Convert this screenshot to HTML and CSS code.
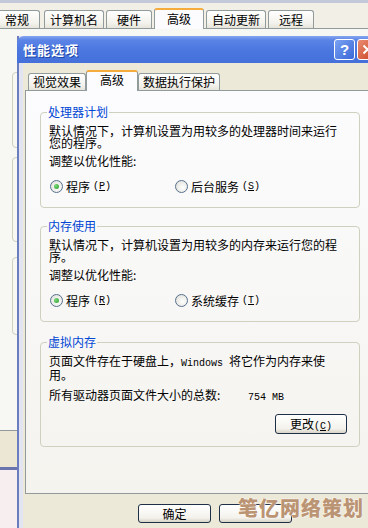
FILE: index.html
```html
<!DOCTYPE html>
<html lang="zh-CN">
  <head>
    <meta charset="UTF-8" />
    <title>性能选项</title>
    <link rel="stylesheet" href="styles.css">
  </head>
  <body>
    <!-- window behind: System Properties -->
    <div class="sysprops">
      <div class="sys-tabs">
        <span class="stab first">常规</span>
        <span class="stab">计算机名</span>
        <span class="stab">硬件</span>
        <span class="stab on">高级</span>
        <span class="stab">自动更新</span>
        <span class="stab">远程</span>
      </div>
      <div class="sys-panel">
        <div class="sys-group g1"></div>
        <div class="sys-group g2"></div>
        <div class="sys-group g3"></div>
      </div>
      <div class="sys-foot"></div>
    </div>

    <div class="dialog">
      <div class="titlebar">
        <span class="title">性能选项</span>
        <span class="tb-btn help">?</span>
        <span class="tb-btn close">
          <svg width="11" height="11" viewBox="0 0 11 11"><path d="M1.5 1.5L9.5 9.5M9.5 1.5L1.5 9.5" stroke="#fff" stroke-width="2" fill="none"/></svg>
        </span>
      </div>

      <div class="dlg-body">
        <div class="tabs">
          <span class="tab">视觉效果</span>
          <span class="tab on">高级</span>
          <span class="tab">数据执行保护</span>
        </div>

        <div class="panel">
          <fieldset class="group">
            <legend>处理器计划</legend>
            <p>默认情况下，计算机设置为用较多的处理器时间来运行您的程序。</p>
            <p class="adjust">调整以优化性能:</p>
            <div class="choices">
              <label class="choice"><span class="radio checked"></span>程序<span class="key">(<u>P</u>)</span></label>
              <label class="choice"><span class="radio"></span>后台服务<span class="key">(<u>S</u>)</span></label>
            </div>
          </fieldset>

          <fieldset class="group">
            <legend>内存使用</legend>
            <p>默认情况下，计算机设置为用较多的内存来运行您的程序。</p>
            <p class="adjust">调整以优化性能:</p>
            <div class="choices">
              <label class="choice"><span class="radio checked"></span>程序<span class="key">(<u>R</u>)</span></label>
              <label class="choice"><span class="radio"></span>系统缓存<span class="key">(<u>T</u>)</span></label>
            </div>
          </fieldset>

          <fieldset class="group vm">
            <legend>虚拟内存</legend>
            <p>页面文件存在于硬盘上，<span class="key">Windows </span>将它作为内存来使用。</p>
            <p class="total"><span class="total-label">所有驱动器页面文件大小的总数:</span><span class="key">754 MB</span></p>
            <div class="btn-row">
              <button class="xp-btn change">更改<span class="key">(<u>C</u>)</span></button>
            </div>
          </fieldset>
        </div>

        <div class="actions">
          <button class="xp-btn">确定</button>
          <button class="xp-btn"></button>
        </div>
      </div>
    </div>

    <div class="watermark">笔亿网络策划</div>
  </body>
</html>
```

FILE: styles.css
```css
* {
  box-sizing: border-box;
}

body {
  margin: 0;
  width: 368px;
  height: 528px;
  overflow: hidden;
  position: relative;
  background: #f7eef0;
  font-family: "Noto Sans CJK SC", "Noto Sans", sans-serif;
  font-size: 12px;
  color: #000;
}

/* background window */

.sysprops {
  height: 470px;
  display: flex;
  flex-direction: column;
  background: #f1efe6;
  border-top: 3px solid #c3c9d8;
  border-bottom: 3px solid #6a74ad;
  padding-top: 5px;
}

.sys-tabs {
  display: flex;
  align-items: flex-end;
  gap: 2px;
  height: 20px;
  margin-left: -6px;
}

.stab {
  height: 18px;
  min-width: 46px;
  padding: 0 5px;
  line-height: 17px;
  text-align: center;
  border: 1px solid #919b9c;
  border-bottom: 0;
  border-radius: 3px 3px 0 0;
  background: linear-gradient(#ffffff, #f3f2ec 70%, #e6e4da);
}

.stab.first {
  margin-right: 2px;
}

.stab.on {
  height: 21px;
  min-width: 50px;
  margin-bottom: -1px;
  position: relative;
  z-index: 1;
  background: #fcfcfe;
  border-top: 2px solid #f5ac3c;
}

.sys-panel {
  height: 403px;
  border-top: 1px solid #919b9c;
  border-bottom: 1px solid #919b9c;
  box-shadow: 0 1px #fff;
  background: #f7f7f3;
  padding: 43px 0 0 12px;
}

.sys-group {
  width: 300px;
  border: 1px solid #d0d0bf;
  border-radius: 4px;
}

.g1 {
  height: 76px;
}

.g2 {
  height: 85px;
  margin-top: 9px;
}

.g3 {
  height: 78px;
  margin-top: 15px;
}

.sys-foot {
  flex: 1;
  background: #ece6d4;
}

/* dialog */

.dialog {
  position: absolute;
  left: 17px;
  top: 36px;
  width: 372px;
  height: 500px;
  background: #ece9d8;
  box-shadow: inset 2px 0 #6b7dbf, inset 6px 0 #e2e4f2;
}

.titlebar {
  height: 27px;
  display: flex;
  align-items: center;
  padding: 0 11px 0 6px;
  border-radius: 7px 7px 0 0;
  background: linear-gradient(#86a6f0, #5b84e6 15%, #4a76df 55%, #4570da);
}

.title {
  flex: 1;
  color: #fff;
  font-size: 13px;
  font-weight: bold;
  letter-spacing: 1px;
  text-shadow: 1px 1px 0 #1d45a8;
}

.tb-btn {
  width: 21px;
  height: 21px;
  display: flex;
  align-items: center;
  justify-content: center;
  border: 1px solid #fff;
  border-radius: 3px;
  color: #fff;
  font-family: "Liberation Sans", sans-serif;
  font-size: 15px;
  font-weight: bold;
}

.help {
  background: linear-gradient(135deg, #7aa2f2, #3a68d8);
}

.close {
  margin-left: 2px;
  background: linear-gradient(135deg, #e98d73, #c9401f);
}

.dlg-body {
  padding: 7px 0 0 8px;
}

.tabs {
  display: flex;
  align-items: flex-end;
  height: 20px;
  padding-left: 3px;
}

.tab {
  height: 17px;
  min-width: 48px;
  padding: 0 4px;
  line-height: 16px;
  text-align: center;
  border: 1px solid #919b9c;
  border-bottom: 0;
  border-radius: 3px 3px 0 0;
  background: linear-gradient(#ffffff, #f3f2ec 70%, #e6e4da);
}

.tab.on {
  height: 21px;
  min-width: 52px;
  margin-bottom: -1px;
  position: relative;
  z-index: 1;
  line-height: 15px;
  background: #fcfcfe;
  border-top: 2px solid #f5ac3c;
}

.panel {
  width: 356px;
  height: 404px;
  border: 1px solid #919b9c;
  background: linear-gradient(#fcfcfe, #f4f3ee);
  padding: 15px 0 0 14px;
}

.group {
  width: 320px;
  min-width: 0;
  margin: 0;
  padding: 7px 12px 14px 8px;
  border: 1px solid #d0d0bf;
  border-radius: 4px;
}

.group + .group {
  margin-top: 12px;
}

.group.vm {
  margin-top: 14px;
  padding-bottom: 12px;
}

legend {
  padding: 0 1px;
  margin-left: -2px;
  line-height: 12px;
  color: #0046d5;
}

p {
  margin: 0;
  line-height: 12px;
}

.adjust {
  margin-top: 6px;
}

.key {
  font-family: "Liberation Mono", monospace;
  font-size: 10px;
  line-height: 10px;
}

.choices {
  display: flex;
  height: 13px;
  margin-top: 13px;
}

.choice {
  width: 124px;
  display: flex;
  align-items: center;
  gap: 3px;
  margin-left: 1px;
  line-height: 13px;
}

.radio {
  width: 13px;
  height: 13px;
  display: flex;
  align-items: center;
  justify-content: center;
  border: 1px solid #56708f;
  border-radius: 50%;
  background: radial-gradient(circle at 60% 60%, #ffffff, #dcdbd3);
}

.radio.checked::after {
  content: "";
  width: 5px;
  height: 5px;
  border-radius: 50%;
  background: radial-gradient(circle at 35% 35%, #7fd67f, #22a022);
}

.total {
  margin-top: 8px;
}

.total-label {
  display: inline-block;
  width: 199px;
}

.btn-row {
  display: flex;
  justify-content: flex-end;
  margin-top: 11px;
}

.xp-btn {
  height: 19px;
  width: 73px;
  padding: 0;
  font-family: inherit;
  font-size: 12px;
  line-height: 17px;
  color: #000;
  border: 1px solid #1f2f48;
  border-radius: 3px;
  background: linear-gradient(#ffffff, #f3f2ec 75%, #d8d3c6);
}

.xp-btn.change {
  width: 72px;
  height: 20px;
  line-height: 18px;
}

.actions {
  display: flex;
  gap: 8px;
  margin-top: 10px;
  padding-left: 113px;
}

/* site watermark drawn over the screenshot */

.watermark {
  position: absolute;
  left: 238px;
  top: 496px;
  font-size: 20px;
  font-weight: 900;
  line-height: 24px;
  letter-spacing: 1px;
  color: #bb9474;
  text-shadow: 0 0 1px #fff, 0 0 2px #fff;
}
```
